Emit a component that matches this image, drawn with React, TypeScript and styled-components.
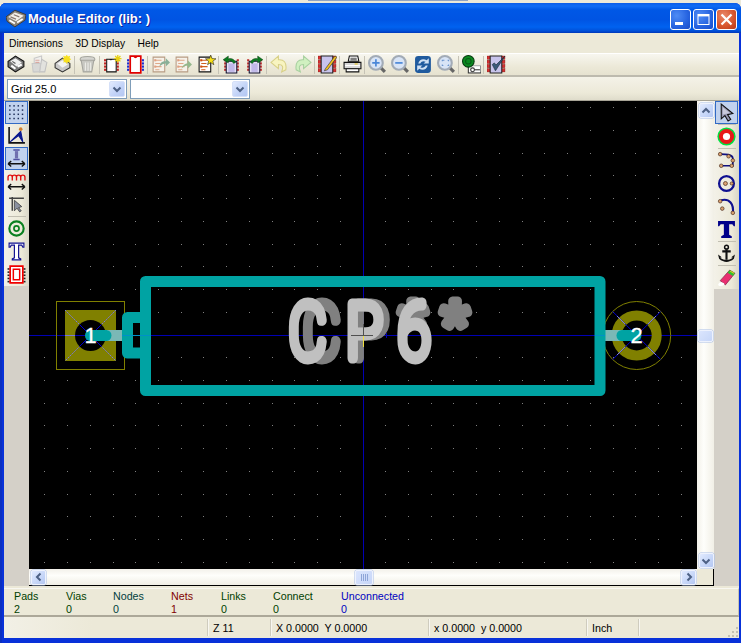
import React from "react";
import styled, { createGlobalStyle } from "styled-components";

const Global = createGlobalStyle`
  html, body { margin: 0; padding: 0; background: #ece9d8; }
  body { width: 741px; height: 643px; overflow: hidden; font-family: "Liberation Sans", Arial, sans-serif; }
`;

const Page = styled.div`
  width: 741px;
  height: 643px;
  display: flex;
  flex-direction: column;
  background: #ece9d8;
`;
const DesktopStrip = styled.div`
  height: 3px;
  flex: none;
  display: flex;
  justify-content: center;
  padding-left: 35px;
  box-sizing: border-box;
`;
const DesktopTab = styled.div`
  width: 160px;
  height: 1px;
  background: #8fa3c4;
`;
const Window = styled.div`
  flex: 1;
  min-height: 0;
  display: flex;
  flex-direction: column;
  background: #0831d9;
  border-radius: 6px 6px 0 0;
  padding: 0 2px 5px 4px;
  box-shadow: inset 2px 0 0 #0a2fc0;
`;
const TitleBar = styled.div`
  height: 30px;
  flex: none;
  margin: 0 -2px 0 -4px;
  padding: 0 4px 0 6px;
  display: flex;
  align-items: center;
  gap: 2px;
  border-radius: 6px 6px 0 0;
  background: linear-gradient(180deg, #0a5ce8 0%, #0f6cf5 10%, #0058e6 22%, #0054e3 55%, #0062f0 80%, #0050d8 93%, #0036b8 100%);
`;
const TitleText = styled.span`
  flex: 1;
  font: bold 13px "Liberation Sans", Arial, sans-serif;
  color: #fff;
  text-shadow: 1px 1px 0 #0f1f9a;
  padding-top: 1px;
`;
const CaptionButtons = styled.div`
  display: flex;
  gap: 2px;
  padding-top: 2px;
`;
const CaptionButton = styled.div<{ $close?: boolean }>`
  width: 21px;
  height: 21px;
  box-sizing: border-box;
  border: 1px solid #fff;
  border-radius: 3px;
  display: flex;
  align-items: center;
  justify-content: center;
  background: ${(p) =>
    p.$close
      ? "radial-gradient(circle at 35% 30%, #e88a6c 0%, #d9572f 55%, #b83818 100%)"
      : "radial-gradient(circle at 30% 30%, #4f8cf5 0%, #2663e0 60%, #1a4cc8 100%)"};
`;
const MenuBar = styled.div`
  height: 20px;
  flex: none;
  display: flex;
  align-items: center;
  padding-left: 5px;
  gap: 12.5px;
  background: #ece9d8;
  color: #000;
`;
const MenuEntry = styled.span`
  display: block;
  font-family: "Liberation Sans", Arial, sans-serif;
  font-size: 10.3px;
`;
const ToolStrip = styled.div`
  height: 21px;
  flex: none;
  display: flex;
  align-items: center;
  padding-left: 1px;
  background: linear-gradient(180deg, #f7f6ef 0%, #ece9d8 60%, #e6e2d0 100%);
  border-top: 1px solid #fff;
  border-bottom: 2px solid #bdbaae;
  box-sizing: content-box;
`;
const ToolCell = styled.div`
  width: 23px;
  height: 21px;
  flex: none;
  display: flex;
  align-items: center;
  justify-content: center;
`;
const VSep = styled.div`
  width: 2px;
  height: 18px;
  flex: none;
  background: linear-gradient(90deg, transparent 0 0.5px, #c6c3b6 0.5px 1.5px, transparent 1.5px);
`;
const ComboStrip = styled.div`
  height: 23px;
  flex: none;
  display: flex;
  align-items: center;
  gap: 3px;
  padding: 0 0 0 3px;
  background: linear-gradient(180deg, #f4f2e8 0%, #ece9d8 70%, #dfdccb 100%);
  border-bottom: 1px solid #a7a496;
`;
const Combo = styled.div<{ $w: number }>`
  width: ${(p) => p.$w}px;
  height: 20px;
  box-sizing: border-box;
  background: #fff;
  border: 1px solid #7f9db9;
  display: flex;
  align-items: center;
  justify-content: space-between;
  padding: 0 1px 0 3px;
  font-size: 11px;
`;
const ComboArrow = styled.div`
  width: 16px;
  height: 16px;
  border-radius: 2px;
  background: linear-gradient(135deg, #e1eafe 0%, #c1d2f7 60%, #b4c7f2 100%);
  border: 1px solid #d5e0f8;
  box-sizing: border-box;
  display: flex;
  align-items: center;
  justify-content: center;
`;
const Workspace = styled.div`
  height: 487px;
  flex: none;
  display: flex;
  box-sizing: border-box;
  padding-bottom: 2px;
  background: #ece9d8;
`;
const SideBar = styled.div<{ $w: number }>`
  width: ${(p) => p.$w}px;
  flex: none;
  display: flex;
  flex-direction: column;
  align-items: center;
  box-sizing: border-box;
  background: linear-gradient(90deg, #f3f1e8 0%, #ece9d8 70%, #d9d6c8 100%);
`;
const SideButton = styled.div<{ $on?: boolean }>`
  width: 23px;
  height: 23px;
  flex: none;
  box-sizing: border-box;
  display: flex;
  align-items: center;
  justify-content: center;
  background: ${(p) => (p.$on ? "#c1d2ee" : "transparent")};
  border: 1px solid ${(p) => (p.$on ? "#316ac5" : "transparent")};
`;
const HSep = styled.div`
  width: 18px;
  height: 1px;
  flex: none;
  background: #c2bfb2;
`;
const SideFill = styled.div`
  flex: 1;
  align-self: stretch;
  background: #d4d0c8;
`;
const CanvasArea = styled.div`
  flex: 1;
  min-width: 0;
  display: grid;
  grid-template-columns: 668px 17px;
  grid-template-rows: 468px 17px;
  background: #000;
`;
const Drawing = styled.svg`
  display: block;
  width: 668px;
  height: 468px;
  background: #000;
`;
const VTrack = styled.div`
  background: linear-gradient(90deg, #f3f1ea 0%, #fefefb 40%, #f1efe6 100%);
  display: flex;
  flex-direction: column;
  justify-content: space-between;
  align-items: center;
  padding: 2px 0 1px 1px;
  box-sizing: border-box;
  position: relative;
`;
const HTrack = styled.div`
  background: linear-gradient(180deg, #f3f1ea 0%, #fefefb 40%, #f1efe6 100%);
  border-bottom: 1px solid #000;
  display: flex;
  justify-content: space-between;
  align-items: center;
  padding: 0 1px 0 2px;
  box-sizing: border-box;
  position: relative;
`;
const Corner = styled.div`
  background: #ece9d8;
  border-bottom: 1px solid #000;
  border-right: 1px solid #000;
  box-sizing: border-box;
`;
const ScrollBtn = styled.div`
  width: 15px;
  height: 15px;
  flex: none;
  box-sizing: border-box;
  border: 1px solid #eef2fd;
  border-radius: 2px;
  background: linear-gradient(135deg, #e1eafe 0%, #c6d6f8 60%, #b4c7f2 100%);
  box-shadow: 0 0 0 0.5px #a8bde8;
  display: flex;
  align-items: center;
  justify-content: center;
`;
const Thumb = styled.div<{ $vertical?: boolean }>`
  position: absolute;
  box-sizing: border-box;
  border: 1px solid #eef2fd;
  border-radius: 2px;
  background: linear-gradient(135deg, #dbe5fd 0%, #c6d6f8 100%);
  box-shadow: 0 0 0 0.5px #a8bde8;
  display: flex;
  align-items: center;
  justify-content: center;
  ${(p) =>
    p.$vertical
      ? "left: 1px; top: 229px; width: 15px; height: 12px;"
      : "left: 326px; top: 1px; width: 18px; height: 15px;"}
`;
const MessagePanel = styled.div`
  height: 29px;
  flex: none;
  display: flex;
  box-sizing: border-box;
  padding: 1px 0 0 10px;
  background: #ece9d8;
  border-top: 1px solid #f8f7f1;
  border-right: 1px solid #c5c2b4;
  border-bottom: 2px solid #aca899;
`;
const Metric = styled.div<{ $w: number; $c: string }>`
  width: ${(p) => p.$w}px;
  flex: none;
  color: ${(p) => p.$c};
  font-size: 10.7px;
  line-height: 13px;
`;
const MetricLabel = styled.div`
  white-space: nowrap;
`;
const StatusBar = styled.div`
  height: 21px;
  flex: none;
  display: flex;
  font-size: 10.7px;
  color: #000;
  position: relative;
  background: linear-gradient(90deg, #f2f0e6 0%, #ece9d8 12%);
`;
const StatusCell = styled.div<{ $w: number; $line?: boolean }>`
  width: ${(p) => p.$w}px;
  flex: none;
  box-sizing: border-box;
  padding-left: 4px;
  display: flex;
  align-items: center;
  white-space: pre;
  margin: 2px 0;
  border-left: ${(p) => (p.$line ? "1px solid #f8f7f1" : "none")};
  box-shadow: ${(p) => (p.$line ? "-1px 0 0 #cfccbe" : "none")};
`;
const Grip = styled.svg`
  position: absolute;
  right: 0;
  bottom: 0;
`;

const Ico: React.FC<{ children: React.ReactNode; s?: number }> = ({ children, s = 19 }) => (
  <svg width={s} height={s} viewBox="0 0 18 18" fill="none">
    {children}
  </svg>
);

const Book = () => (
  <Ico s={20}>
    <path d="M0 8 L8 2 L18 6 L17 11 L8 17 L1 12Z" fill="#8a8478" stroke="#3a3530" strokeWidth="0.8" />
    <path d="M2 8 L8 4 L16 7 L9 12Z" fill="#f4f0e8" />
    <path d="M4 8 L9 10 M7 6 L12 8" stroke="#8a7a70" />
    <path d="M3 11 L8 14 M10 13 L15 10" stroke="#fff" strokeWidth="1.6" />
  </Ico>
);
const IcoOpen = () => (
  <Ico>
    <path d="M1 6 L8 1 L16 6 L16 11 L8 16 L1 11Z" fill="#777" stroke="#111" />
    <path d="M3 6 L8 3 L14 7 L9 11Z" fill="#f0f0f0" />
    <path d="M4 10 L8 13 M10 11 L14 9" stroke="#fff" strokeWidth="2" />
    <path d="M5 6 L8 8" stroke="#555" />
  </Ico>
);
const IcoSaveFaded = () => (
  <Ico>
    <path d="M4 3 L11 1 L11 15 L4 16Z" fill="#f0f0ee" stroke="#c8c8c8" />
    <path d="M11 4 L16 7 L14 16 L9 16Z" fill="#e2e2de" stroke="#c0c0c0" />
    <path d="M2 8 L10 8 L9 16 L3 16Z" fill="#d8d8d6" stroke="#c8c8c8" />
    <path d="M5 5h4M5 7h4" stroke="#d8a8a0" />
  </Ico>
);
const IcoNewLib = () => (
  <Ico>
    <path d="M2 8 L9 3 L16 8 L16 12 L9 16 L2 12Z" fill="#c9c9c9" stroke="#333" />
    <path d="M4 8 L9 5 L14 9 L9 12Z" fill="#f4f4f4" />
    <circle cx="13" cy="4" r="3" fill="#f7e020" />
    <path d="M13 0v8M9 4h8M10 1l6 6M16 1l-6 6" stroke="#f7e020" />
  </Ico>
);
const IcoTrash = () => (
  <Ico>
    <ellipse cx="9" cy="4" rx="7" ry="2.5" fill="#d5d5d0" stroke="#a5a59e" />
    <path d="M3 5 L5 16 H13 L15 5Z" fill="#c8c8c2" stroke="#a5a59e" />
    <path d="M7 7v8M9.5 7v8M12 7v8" stroke="#eeeeea" />
  </Ico>
);
const ChipPins = ({ c = "#c02020", x1 = 2, x2 = 15 }: { c?: string; x1?: number; x2?: number }) => (
  <>
    {[4, 7, 10, 13].map((y) => (
      <React.Fragment key={y}>
        <rect x={x1} y={y} width="2" height="2" fill={c} />
        <rect x={x2} y={y} width="2" height="2" fill={c} />
      </React.Fragment>
    ))}
  </>
);
const IcoChipNew = () => (
  <Ico>
    <ChipPins x1={1} x2={13} />
    <path d="M3.5 4 H12.5 V16 H3.5Z" fill="#fff" stroke="#111" />
    <path d="M6 4a1.6 1.6 0 0 0 3 0" fill="#111" />
    <path d="M14 0v7M10.5 3.5h7M11.5 1l5 5M16.5 1l-5 5" stroke="#e8d010" strokeWidth="1.2" />
  </Ico>
);
const IcoChip = () => (
  <Ico>
    <ChipPins c="#1a2ad0" x1={1} x2={15} />
    <path d="M4 1 H14 V17 H4Z" fill="#fff" stroke="#e00000" strokeWidth="1.6" />
    <path d="M7 1a2 2 0 0 0 4 0" fill="#e00000" />
  </Ico>
);
const Board = ({ faded }: { faded?: boolean }) => (
  <>
    <path d="M2 2 H13 V16 H2Z" fill={faded ? "#f6f2ea" : "#fff"} stroke={faded ? "#b89c84" : "#111"} />
    <path d="M4 5 H10 M4 8 H9 M4 11 H10 M4 14 H8" stroke={faded ? "#e0a888" : "#d06020"} />
    <rect x="3" y="4" width="2" height="2" fill={faded ? "#e0a080" : "#d05010"} />
    <rect x="3" y="10" width="2" height="2" fill={faded ? "#e0a080" : "#d05010"} />
  </>
);
const IcoImport = () => (
  <Ico>
    <Board faded />
    <path d="M8 11 C9 6 12 6 14 6 V3 L18 7 L14 11 V8 C12 8 10 9 8 11Z" fill="#8ab098" />
  </Ico>
);
const IcoExport = () => (
  <Ico>
    <Board faded />
    <path d="M7 13 C9 8 12 8 13 8 V5 L17 9 L13 13 V10 C11 10 9 11 7 13Z" fill="#94b88c" />
  </Ico>
);
const IcoBoardStar = () => (
  <Ico>
    <Board />
    <path d="M13 0 L14.2 3.4 L18 3.6 L15 5.8 L16 9.2 L13 7.2 L10 9.2 L11 5.8 L8 3.6 L11.8 3.4Z" fill="#f8e018" stroke="#111" strokeWidth="0.5" />
  </Ico>
);
const ModuleBody = () => (
  <>
    <ChipPins c="#c03030" x1={2} x2={14} />
    <path d="M4 6 H14 V17 H4Z" fill="#e4e0f4" stroke="#101030" />
    <rect x="6" y="8" width="6" height="8" fill="#c0b8e8" />
  </>
);
const IcoModuleIn = () => (
  <Ico>
    <ModuleBody />
    <path d="M13 7 C11 3 8 3 6 3.5 V1 L1 4.5 L6 7.5 V5.5 C8 5 10 6 11 8Z" fill="#0c7a20" stroke="#063a10" strokeWidth="0.4" />
  </Ico>
);
const IcoModuleOut = () => (
  <Ico>
    <ModuleBody />
    <path d="M5 7 C7 3 10 3 12 3.5 V1 L17 4.5 L12 7.5 V5.5 C10 5 8 6 7 8Z" fill="#0c7a20" stroke="#063a10" strokeWidth="0.4" />
  </Ico>
);
const IcoUndo = () => (
  <Ico>
    <path d="M1 7 L8 1 V4.5 C13 4 16 7 15 14 L11 16 C13 11 12 9 8 9 V13Z" fill="#f8f4c0" stroke="#d8d088" />
  </Ico>
);
const IcoRedo = () => (
  <Ico>
    <path d="M17 7 L10 1 V4.5 C5 4 2 7 3 14 L7 16 C5 11 6 9 10 9 V13Z" fill="#d0f0c0" stroke="#a8d0a0" />
  </Ico>
);
const Sprockets = () => (
  <>
    {[1, 5, 9, 13].map((y) => (
      <React.Fragment key={y}>
        <rect x="0" y={y} width="3" height="3" fill="#d83030" stroke="#801010" strokeWidth="0.4" />
        <rect x="14" y={y} width="3" height="3" fill="#d83030" stroke="#801010" strokeWidth="0.4" />
      </React.Fragment>
    ))}
    <path d="M3 1 H14 V17 H3Z" fill="#c8c4ec" stroke="#222" />
  </>
);
const IcoEditFrame = () => (
  <Ico>
    <Sprockets />
    <path d="M7 13 L16 1 L18 2 L9 14 L6 15Z" fill="#f0c020" stroke="#333" strokeWidth="0.6" />
  </Ico>
);
const IcoPrint = () => (
  <Ico>
    <path d="M6 1 H14 L15 6 H5Z" fill="#fff" stroke="#111" />
    <path d="M7 3h6M7 4.6h6" stroke="#555" />
    <path d="M1 7 H17 V13 H1Z" fill="#d8d8d8" stroke="#111" />
    <path d="M2 10 H16" stroke="#fff" />
    <rect x="11" y="8" width="3" height="1" fill="#e0c020" />
    <path d="M3 13 H15 V16 H3Z" fill="#fff" stroke="#111" />
  </Ico>
);
const Lens = ({ children }: { children?: React.ReactNode }) => (
  <>
    <path d="M12 12 L16 16" stroke="#666" strokeWidth="3" />
    <circle cx="7.5" cy="7.5" r="6.5" fill="#d8e4f6" stroke="#a2abb6" strokeWidth="2" />
    {children}
  </>
);
const IcoZoomIn = () => (
  <Ico>
    <Lens>
      <path d="M4 7.5h7M7.5 4v7" stroke="#4a86d8" strokeWidth="1.6" />
    </Lens>
  </Ico>
);
const IcoZoomOut = () => (
  <Ico>
    <Lens>
      <path d="M4 7.5h7" stroke="#4a86d8" strokeWidth="1.6" />
    </Lens>
  </Ico>
);
const IcoRefresh = () => (
  <Ico>
    <rect x="1" y="1" width="15" height="16" rx="3" fill="#1f5a9e" />
    <path d="M4 8 C5 4 9 3 12 5 L14 3 V8 H9 L11 6.5 C9 5.5 7 6 6 8Z" fill="#cfe0f4" />
    <path d="M13 10 C12 14 8 15 5 13 L3 15 V10 H8 L6 11.5 C8 12.5 10 12 11 10Z" fill="#cfe0f4" />
  </Ico>
);
const IcoZoomFit = () => (
  <Ico>
    <Lens>
      <path d="M5 6V5h2M10 5h1v1M11 9v1h-1M6 10H5V9" stroke="#6a94cc" />
    </Lens>
  </Ico>
);
const IcoPadSettings = () => (
  <Ico>
    <rect x="6" y="10" width="12" height="7" fill="#fff" stroke="#333" />
    <path d="M6 10 H18" stroke="#bbb" />
    <circle cx="10" cy="14" r="1.8" stroke="#333" />
    <path d="M12 14h5" stroke="#333" />
    <circle cx="6" cy="6" r="5.5" fill="#0a8a20" stroke="#063a10" />
    <circle cx="6" cy="6" r="2.6" fill="#0a8a20" stroke="#0a5a18" />
  </Ico>
);
const IcoCheck = () => (
  <Ico>
    <Sprockets />
    <path d="M5 9 L8 15 L17 1 L8.5 9.5 L7 7.5Z" fill="#3a5a7a" stroke="#1a2a3a" strokeWidth="0.6" />
  </Ico>
);
const IcoGrid = () => (
  <Ico>
    {[2, 6, 10, 14].map((y) =>
      [2, 6, 10, 14].map((x) => <rect key={`${x}-${y}`} x={x} y={y} width="1.4" height="1.4" fill="#20305a" />)
    )}
  </Ico>
);
const IcoPolar = () => (
  <Ico>
    <path d="M2 1 V16 H17" stroke="#111" strokeWidth="1.5" />
    <path d="M3 15 L13 5 L15 15 L11 9 Z" fill="#0a1a90" stroke="#0a1a90" />
    <circle cx="13" cy="3" r="1.7" fill="#d08030" />
  </Ico>
);
const IcoInchMm = () => (
  <Ico>
    <path d="M6 1 H12 M6 10 H12" stroke="#5050a0" strokeWidth="1.5" />
    <rect x="7.5" y="2" width="3" height="7" fill="#7070b0" />
    <path d="M1 14 H17 M1 14 L4 11.5 M1 14 L4 16.5 M17 14 L14 11.5 M17 14 L14 16.5" stroke="#111" strokeWidth="1.3" />
  </Ico>
);
const IcoMm = () => (
  <Ico>
    <path d="M1 8 V5 Q1 3 3 3 Q5 3 5 5 V8 M5 5 Q5 3 7 3 Q9 3 9 5 V8 M9 5 Q9 3 11 3 Q13 3 13 5 V8 M13 5 Q13 3 15 3 Q17 3 17 5 V8" stroke="#e01010" strokeWidth="1.3" />
    <path d="M1 14 H17 M1 14 L4 11.5 M1 14 L4 16.5 M17 14 L14 11.5 M17 14 L14 16.5" stroke="#111" strokeWidth="1.3" />
  </Ico>
);
const IcoCursorShape = () => (
  <Ico>
    <path d="M2 3 H16 M5 2 V15" stroke="#444" strokeWidth="1.4" />
    <path d="M7 5 L7 15 L9.5 12.5 L12 16 L13.5 15 L11 12 L14 11Z" fill="#8a90a0" stroke="#333" strokeWidth="0.7" />
  </Ico>
);
const IcoPadMode = () => (
  <Ico>
    <circle cx="9" cy="9" r="6.8" stroke="#0a8020" strokeWidth="2" />
    <circle cx="9" cy="9" r="2.4" stroke="#0a8020" strokeWidth="1.6" />
  </Ico>
);
const IcoTextOutline = () => (
  <Ico>
    <path d="M2 1 H16 V5 H15 L14 3 H11 V15 L13 16 V17 H5 V16 L7 15 V3 H4 L3 5 H2Z" fill="#fff" stroke="#101090" strokeWidth="1.1" />
  </Ico>
);
const IcoModuleRed = () => (
  <Ico>
    {[3, 6, 9, 12, 15].map((y) => (
      <React.Fragment key={y}>
        <rect x="0.5" y={y} width="2" height="1.5" fill="#202020" />
        <rect x="15.5" y={y} width="2" height="1.5" fill="#202020" />
      </React.Fragment>
    ))}
    <path d="M3 1 H15 V17 H3Z" fill="#fff" stroke="#f00000" strokeWidth="1.6" />
    <path d="M6 4 H12 V14 H6Z" fill="#fff" stroke="#f00000" strokeWidth="1.4" />
  </Ico>
);
const IcoArrow = () => (
  <Ico>
    <path d="M4 1 L4 15 L7.5 12 L10.5 17 L13 15.5 L10 11 L15 10Z" fill="#9a9cb6" stroke="#111" strokeWidth="1" />
    <path d="M5.5 4 L5.5 11 L12 9.5Z" fill="#c8cadb" />
  </Ico>
);
const IcoRedPad = () => (
  <Ico>
    <circle cx="9" cy="9" r="8.6" fill="#00e040" />
    <circle cx="9" cy="9" r="7.2" fill="#e81818" />
    <circle cx="9" cy="9" r="3.4" fill="#fff" />
  </Ico>
);
const Dot = ({ x, y }: { x: number; y: number }) => <circle cx={x} cy={y} r="1.7" fill="#d8a070" stroke="#402010" strokeWidth="0.6" />;
const IcoSegment = () => (
  <Ico>
    <path d="M3 3 C8 3 15 3 15 7 V14 H4" stroke="#101080" strokeWidth="1.6" />
    <Dot x={3} y={3} />
    <Dot x={11} y={5} />
    <Dot x={15} y={9} />
    <Dot x={4} y={14} />
    <Dot x={14} y={14} />
  </Ico>
);
const IcoCircle = () => (
  <Ico>
    <circle cx="9" cy="9" r="7" stroke="#101090" strokeWidth="2.2" />
    <circle cx="8" cy="9" r="1.9" fill="#d8a070" stroke="#402010" strokeWidth="0.6" />
    <circle cx="14" cy="9" r="1.5" fill="#d8a070" stroke="#402010" strokeWidth="0.6" />
  </Ico>
);
const IcoArc = () => (
  <Ico>
    <path d="M4 3 C12 1 16 7 15 15" stroke="#101090" strokeWidth="2" />
    <Dot x={3} y={4} />
    <Dot x={5} y={11} />
    <Dot x={15} y={15} />
  </Ico>
);
const IcoTextBold = () => (
  <Ico>
    <path d="M1 1 H17 V6 H16 L14.5 4 H11.5 V14 L14 15.5 V17 H4 V15.5 L6.5 14 V4 H3.5 L2 6 H1Z" fill="#00008a" />
  </Ico>
);
const IcoAnchor = () => (
  <Ico>
    <circle cx="9" cy="3" r="1.8" stroke="#111" strokeWidth="1.4" />
    <path d="M9 5 V15 M5 7 H13" stroke="#111" strokeWidth="2" />
    <path d="M1 10 L2 14 C4 16 7 17 9 17 C11 17 14 16 16 14 L17 10 L13.5 12.5 L15 13 C13 14.5 11 15 9 15 C7 15 5 14.5 3 13 L4.5 12.5Z" fill="#111" />
  </Ico>
);
const IcoEraser = () => (
  <Ico>
    <path d="M3 12 L12 2 L17 5 L8 16 Z" fill="#e83070" stroke="#702040" strokeWidth="0.6" />
    <path d="M10 4.5 L15 7.5 L17 5 L12 2Z" fill="#30c030" />
    <path d="M12.5 3 L16 5" stroke="#e0d020" />
    <path d="M1 16 C2 13 5 13 7 15 C7 17 3 18 1 16Z" fill="#fff" />
  </Ico>
);

const Chevron = ({ dir }: { dir: "up" | "down" | "left" | "right" }) => {
  const d =
    dir === "up"
      ? "M1.5 6.5 L5 3 L8.5 6.5"
      : dir === "down"
        ? "M1.5 3.5 L5 7 L8.5 3.5"
        : dir === "left"
          ? "M6.5 1.5 L3 5 L6.5 8.5"
          : "M3.5 1.5 L7 5 L3.5 8.5";
  return (
    <svg width="10" height="10" viewBox="0 0 10 10" fill="none">
      <path d={d} stroke="#4d6185" strokeWidth="2" />
    </svg>
  );
};

const TOP: (React.FC | "sep")[] = [
  IcoOpen, IcoSaveFaded, IcoNewLib, "sep", IcoTrash, "sep", IcoChipNew, IcoChip, "sep",
  IcoImport, IcoExport, IcoBoardStar, "sep", IcoModuleIn, IcoModuleOut, "sep", IcoUndo, IcoRedo, "sep",
  IcoEditFrame, "sep", IcoPrint, "sep", IcoZoomIn, IcoZoomOut, IcoRefresh, IcoZoomFit, "sep", IcoPadSettings, "sep", IcoCheck,
];

const GRID = 250 / 11;
const CX = 363;
const CY = 335;

const gridDots = () => {
  const out: React.ReactNode[] = [];
  for (let i = -15; i <= 15; i++) {
    for (let j = -10; j <= 11; j++) {
      const x = Math.floor(CX + i * GRID);
      const y = Math.floor(CY + j * GRID);
      out.push(<rect key={`${i}_${j}`} x={x} y={y} width="1" height="1" fill="#808080" />);
    }
  }
  return out;
};

const SILK = "#00a3a3";
const OLIVE = "#808000";
const AXIS = "#0000b4";
const STUB = "#7ab8b6";

const Glyph = styled.text<{ $c: string; $sw: number }>`
  font-family: Roboto, "Liberation Sans", sans-serif;
  font-weight: 100;
  font-size: 76px;
  fill: ${(p) => p.$c};
  stroke: ${(p) => p.$c};
  stroke-width: ${(p) => p.$sw}px;
  stroke-linejoin: round;
  stroke-linecap: round;
`;
const Star = styled.text<{ $c: string }>`
  font-family: "Liberation Sans", Arial, sans-serif;
  font-size: 72px;
  text-anchor: middle;
  fill: ${(p) => p.$c};
  stroke: ${(p) => p.$c};
  stroke-width: 9px;
  stroke-linejoin: round;
`;
const PadNumber = styled.text`
  font-family: "Liberation Sans", Arial, sans-serif;
  font-size: 22px;
  fill: #fff;
  stroke: #fff;
  stroke-width: 0.3px;
  text-anchor: middle;
`;

const App: React.FC = () => (
  <>
    <Global />
    <Page>
      <DesktopStrip>
        <DesktopTab />
      </DesktopStrip>
      <Window>
        <TitleBar>
          <Book />
          <TitleText>Module Editor (lib: )</TitleText>
          <CaptionButtons>
            <CaptionButton>
              <svg width="13" height="13" viewBox="0 0 13 13">
                <rect x="1" y="9" width="8" height="3" fill="#fff" />
              </svg>
            </CaptionButton>
            <CaptionButton>
              <svg width="13" height="13" viewBox="0 0 13 13" fill="none">
                <rect x="1" y="1.5" width="11" height="10" stroke="#fff" />
                <rect x="1" y="1" width="11" height="2.4" fill="#fff" />
              </svg>
            </CaptionButton>
            <CaptionButton $close>
              <svg width="13" height="13" viewBox="0 0 13 13" fill="none">
                <path d="M1.5 1.5 L11.5 11.5 M11.5 1.5 L1.5 11.5" stroke="#fff" strokeWidth="2.2" />
              </svg>
            </CaptionButton>
          </CaptionButtons>
        </TitleBar>
        <MenuBar>
          <MenuEntry>Dimensions</MenuEntry>
          <MenuEntry>3D Display</MenuEntry>
          <MenuEntry>Help</MenuEntry>
        </MenuBar>
        <ToolStrip>
          {TOP.map((I, i) =>
            typeof I === "string" ? (
              <VSep key={i} />
            ) : (
              <ToolCell key={i}>
                <I />
              </ToolCell>
            )
          )}
        </ToolStrip>
        <ComboStrip>
          <Combo $w={120}>
            Grid 25.0
            <ComboArrow>
              <Chevron dir="down" />
            </ComboArrow>
          </Combo>
          <Combo $w={120}>
            <span />
            <ComboArrow>
              <Chevron dir="down" />
            </ComboArrow>
          </Combo>
        </ComboStrip>
        <Workspace>
          <SideBar $w={25}>
            <SideButton $on><IcoGrid /></SideButton>
            <SideButton><IcoPolar /></SideButton>
            <SideButton $on><IcoInchMm /></SideButton>
            <SideButton><IcoMm /></SideButton>
            <SideButton><IcoCursorShape /></SideButton>
            <HSep />
            <SideButton><IcoPadMode /></SideButton>
            <SideButton><IcoTextOutline /></SideButton>
            <SideButton><IcoModuleRed /></SideButton>
            <SideFill />
          </SideBar>
          <CanvasArea>
            <Drawing viewBox="29 101 668 468">
              <g shapeRendering="crispEdges">
                {gridDots()}
                <rect x={CX} y="101" width="1" height="468" fill={AXIS} />
                <rect x="29" y={CY} width="668" height="1" fill={AXIS} />
              </g>

              <rect x="56.5" y="301.5" width="68" height="68" fill="none" stroke={OLIVE} />
              <rect x="65" y="310" width="51" height="51" fill={OLIVE} />
              <path d="M65 310 L116 361 M116 310 L65 361" stroke="#7a7ae0" strokeDasharray="2 1" />
              <rect x="65" y="335" width="21" height="1" fill="#7a7ad0" />
              <circle cx="90.5" cy="335.5" r="15.5" fill="#000" />
              <path d="M79.5 324.5 L101.5 346.5 M101.5 324.5 L79.5 346.5" stroke="#0000d0" />
              <rect x="75" y="335" width="12" height="1" fill={AXIS} />
              <rect x="106" y="330" width="17" height="11" fill={STUB} />
              <path d="M90.5 335.5 H106" stroke={SILK} strokeWidth="11" strokeLinecap="round" />
              <rect x="106" y="330" width="1" height="11" fill={SILK} />

              <circle cx="636.7" cy="335.5" r="34" fill="none" stroke={OLIVE} />
              <circle cx="636.7" cy="335.5" r="20" fill="none" stroke={OLIVE} strokeWidth="10" />
              <path d="M612.7 311.5 L660.7 359.5 M660.7 311.5 L612.7 359.5" stroke="#0000d0" />
              <path d="M617 316 L625 324 M656 316 L648 324 M617 355 L625 347 M656 355 L648 347" stroke="#7a7ae0" />
              <rect x="605" y="330" width="17" height="11" fill={STUB} />
              <rect x="602" y="330" width="1" height="11" fill="#909090" />
              <path d="M622 335.5 H636" stroke={SILK} strokeWidth="11" strokeLinecap="round" />

              <path d="M145.5 317.5 H127.5 V353 H145.5" fill="none" stroke={SILK} strokeWidth="11" strokeLinejoin="round" strokeLinecap="round" />
              <rect x="145.5" y="281.5" width="454.5" height="109" fill="none" stroke={SILK} strokeWidth="11" strokeLinejoin="round" />
              <rect x="122" y="335" width="29" height="1" fill="#0090c8" />
              <rect x="595" y="335" width="10" height="1" fill="#0090c8" />

              <g transform="translate(303 357.5) scale(0.76 1)"><Glyph $c="#808080" $sw={11}>C</Glyph></g>
              <g transform="translate(352 357.5) scale(0.8 1)"><Glyph $c="#808080" $sw={11}>P</Glyph></g>
              <Star $c="#808080" x="413" y="351">*</Star>
              <Star $c="#808080" x="455" y="351">*</Star>
              <g transform="translate(289 357.5) scale(0.76 1)"><Glyph $c="#c0c0c0" $sw={11}>C</Glyph></g>
              <g transform="translate(346 357.5) scale(0.8 1)"><Glyph $c="#c0c0c0" $sw={11}>P</Glyph></g>
              <g transform="translate(398 357.5) scale(0.78 1)"><Glyph $c="#c0c0c0" $sw={11}>6</Glyph></g>

              <path d="M351 335.5 H373 M363.5 324 V336" stroke="#505050" />
              <path d="M363.5 336 V347" stroke="#f0e040" />
              <path d="M386.5 333 V338" stroke={AXIS} />

              <PadNumber x="90.5" y="343">1</PadNumber>
              <PadNumber x="636.7" y="343">2</PadNumber>
            </Drawing>
            <VTrack>
              <ScrollBtn><Chevron dir="up" /></ScrollBtn>
              <Thumb $vertical />
              <ScrollBtn><Chevron dir="down" /></ScrollBtn>
            </VTrack>
            <HTrack>
              <ScrollBtn><Chevron dir="left" /></ScrollBtn>
              <Thumb>
                <svg width="9" height="7" viewBox="0 0 9 7">
                  <path d="M1.5 0V7M3.5 0V7M5.5 0V7M7.5 0V7" stroke="#8ea5d8" />
                </svg>
              </Thumb>
              <ScrollBtn><Chevron dir="right" /></ScrollBtn>
            </HTrack>
            <Corner />
          </CanvasArea>
          <SideBar $w={25}>
            <SideButton $on><IcoArrow /></SideButton>
            <HSep />
            <SideButton><IcoRedPad /></SideButton>
            <HSep />
            <SideButton><IcoSegment /></SideButton>
            <SideButton><IcoCircle /></SideButton>
            <SideButton><IcoArc /></SideButton>
            <SideButton><IcoTextBold /></SideButton>
            <HSep />
            <SideButton><IcoAnchor /></SideButton>
            <HSep />
            <SideButton><IcoEraser /></SideButton>
            <SideFill />
          </SideBar>
        </Workspace>
        <MessagePanel>
          <Metric $w={52} $c="#004000"><MetricLabel>Pads</MetricLabel>2</Metric>
          <Metric $w={47} $c="#004000"><MetricLabel>Vias</MetricLabel>0</Metric>
          <Metric $w={58} $c="#004040"><MetricLabel>Nodes</MetricLabel>0</Metric>
          <Metric $w={50} $c="#800000"><MetricLabel>Nets</MetricLabel>1</Metric>
          <Metric $w={52} $c="#004000"><MetricLabel>Links</MetricLabel>0</Metric>
          <Metric $w={68} $c="#004000"><MetricLabel>Connect</MetricLabel>0</Metric>
          <Metric $w={70} $c="#0000c0"><MetricLabel>Unconnected</MetricLabel>0</Metric>
        </MessagePanel>
        <StatusBar>
          <StatusCell $w={204} />
          <StatusCell $w={63} $line>Z 11</StatusCell>
          <StatusCell $w={158} $line>{"X 0.0000  Y 0.0000"}</StatusCell>
          <StatusCell $w={158} $line>{"x 0.0000  y 0.0000"}</StatusCell>
          <StatusCell $w={52} $line>Inch</StatusCell>
          <StatusCell $w={98} $line />
          <Grip width="11" height="11" viewBox="0 0 11 11">
            {[[8, 0], [8, 4], [4, 4], [8, 8], [4, 8], [0, 8]].map(([x, y]) => (
              <rect key={`${x}${y}`} x={x} y={y} width="2" height="2" fill="#c4c1b2" />
            ))}
          </Grip>
        </StatusBar>
      </Window>
    </Page>
  </>
);

export default App;
